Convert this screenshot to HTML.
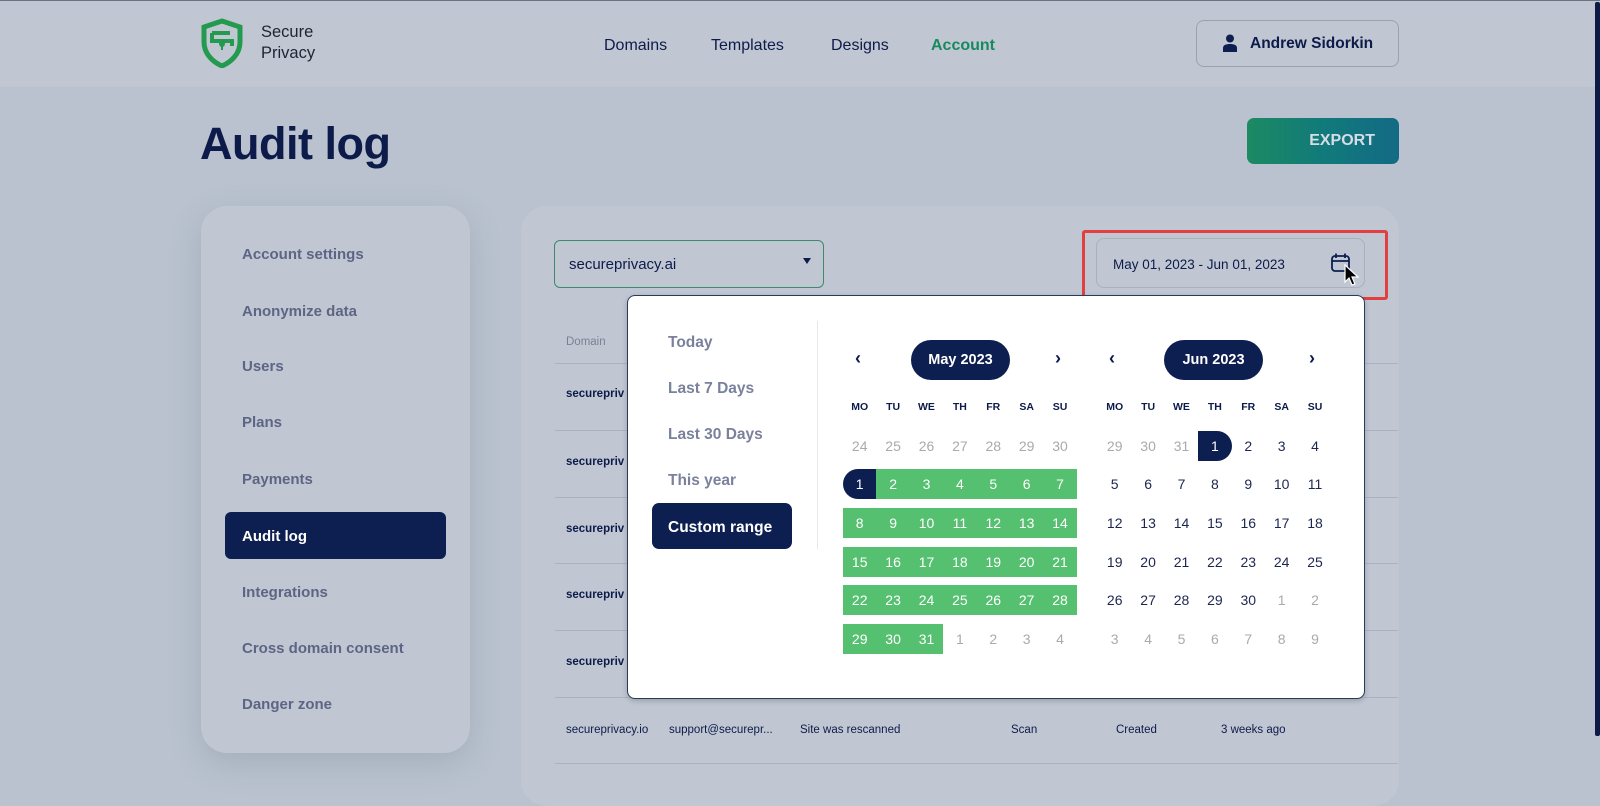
<!DOCTYPE html>
<html><head><meta charset="utf-8"><style>
*{box-sizing:border-box;margin:0;padding:0}
body{width:1600px;height:785px;overflow:hidden;background:#b9c2ce;font-family:"Liberation Sans",sans-serif;color:#0d1b4a;position:relative}
.a{position:absolute}
.hdr{left:0;top:0;width:1600px;height:87px;background:#c0c7d2;border-top:1px solid #6a7285}
.nav{font-size:16px;top:37px;color:#0d1b4a}
.menu{left:242px;font-size:15px;font-weight:bold;color:#5d6585}
.card{border-radius:26px;background:#c0c7d2}
.pre{left:668px;font-size:15.5px;font-weight:bold;color:#7a819c}
.grid{display:grid;grid-template-columns:repeat(7,33.4px);grid-auto-rows:38.6px;font-size:14px;text-align:center}
.grid span{display:flex;align-items:center;justify-content:center}
.grid .d{font-size:10.5px;font-weight:bold;color:#0d1b4a}
.grid .g{color:#aaa}
.grid .n{color:#1d2650}
.grid .r{background:#55c06f;color:#fff;height:30px;align-self:center}
.grid .s{background:#0d1f50;color:#fff;height:30px;align-self:center;border-radius:15px 0 0 15px}
.grid .e{background:#0d1f50;color:#fff;height:30px;align-self:center;border-radius:0 15px 15px 0}
.pill{height:40px;width:99px;border-radius:20px;background:#0d1f50;color:#fff;font-weight:bold;font-size:14.5px;display:flex;align-items:center;justify-content:center}
.arr{font-size:18px;font-weight:bold;color:#0d1b4a}
.row{left:555px;width:843px;height:1px;background:#aab2c0}
.cell{font-size:11.5px;color:#0d1b4a}
</style></head><body>
<div class="a hdr"></div>
<svg class="a" style="left:200px;top:18px" width="44" height="50" viewBox="0 0 44 50"><path d="M22 3 L40 9 V24 C40 36 31 44 22 48 C13 44 4 36 4 24 V9 Z" fill="none" stroke="#239a4e" stroke-width="5"/><path d="M12 15 H30 M12 15 V23 H32 V28" fill="none" stroke="#239a4e" stroke-width="4"/><circle cx="22" cy="26" r="3" fill="#239a4e"/><rect x="21" y="27" width="2" height="5" fill="#239a4e"/></svg>
<div class="a" style="left:261px;top:22px;font-size:16.5px;line-height:21px;color:#1f2433">Secure<br>Privacy</div>
<div class="a nav" style="left:604px">Domains</div>
<div class="a nav" style="left:711px">Templates</div>
<div class="a nav" style="left:831px">Designs</div>
<div class="a nav" style="left:931px;color:#178a5e;font-weight:bold">Account</div>
<div class="a" style="left:1196px;top:20px;width:203px;height:47px;border:1px solid #9aa2b2;border-radius:8px"></div>
<svg class="a" style="left:1222px;top:34px" width="16" height="18" viewBox="0 0 16 18"><circle cx="8" cy="4.5" r="4" fill="#0d1f50"/><path d="M1 18 V14 C1 11 4 10 8 10 C12 10 15 11 15 14 V18 Z" fill="#0d1f50"/></svg>
<div class="a" style="left:1250px;top:35px;font-size:15.5px;font-weight:bold">Andrew Sidorkin</div>
<div class="a" style="left:200px;top:118px;font-size:45px;font-weight:bold;letter-spacing:-0.5px">Audit log</div>
<div class="a" style="left:1247px;top:118px;width:152px;height:46px;border-radius:7px;background:linear-gradient(90deg,#1c8a62,#117a7a 50%,#136a85);color:#d6dde6;font-weight:bold;font-size:16px;display:flex;align-items:center;justify-content:flex-end;padding-right:24px">EXPORT</div>
<div class="a card" style="left:201px;top:206px;width:269px;height:547px;box-shadow:0 10px 30px rgba(120,130,150,.3)"></div>
<div class="a menu" style="top:246px">Account settings</div>
<div class="a menu" style="top:303px">Anonymize data</div>
<div class="a menu" style="top:358px">Users</div>
<div class="a menu" style="top:414px">Plans</div>
<div class="a menu" style="top:471px">Payments</div>
<div class="a" style="left:225px;top:512px;width:221px;height:47px;border-radius:6px;background:#0d1f50"></div>
<div class="a menu" style="top:528px;color:#fff">Audit log</div>
<div class="a menu" style="top:584px">Integrations</div>
<div class="a menu" style="top:640px">Cross domain consent</div>
<div class="a menu" style="top:696px">Danger zone</div>
<div class="a card" style="left:521px;top:206px;width:878px;height:600px"></div>
<div class="a" style="left:554px;top:240px;width:270px;height:48px;border:1px solid #3e8a6a;border-radius:6px"></div>
<div class="a" style="left:569px;top:256px;font-size:15px">secureprivacy.ai</div>
<div class="a" style="left:803px;top:258px;width:0;height:0;border-left:4.5px solid transparent;border-right:4.5px solid transparent;border-top:6px solid #0d1b4a"></div>
<div class="a" style="left:566px;top:336px;font-size:11.5px;color:#7a8196">Domain</div>
<div class="a row" style="top:363px"></div><div class="a row" style="top:430px"></div><div class="a row" style="top:497px"></div><div class="a row" style="top:563px"></div><div class="a row" style="top:630px"></div><div class="a row" style="top:697px"></div><div class="a row" style="top:763px"></div>
<div class="a cell" style="left:566px;top:388px;font-weight:bold">securepriv</div>
<div class="a cell" style="left:566px;top:456px;font-weight:bold">securepriv</div>
<div class="a cell" style="left:566px;top:523px;font-weight:bold">securepriv</div>
<div class="a cell" style="left:566px;top:589px;font-weight:bold">securepriv</div>
<div class="a cell" style="left:566px;top:656px;font-weight:bold">securepriv</div>
<div class="a cell" style="left:566px;top:724px">secureprivacy.io</div>
<div class="a cell" style="left:669px;top:724px">support@securepr...</div>
<div class="a cell" style="left:800px;top:724px">Site was rescanned</div>
<div class="a cell" style="left:1011px;top:724px">Scan</div>
<div class="a cell" style="left:1116px;top:724px">Created</div>
<div class="a cell" style="left:1221px;top:724px">3 weeks ago</div>
<div class="a" style="left:1096px;top:238px;width:269px;height:50px;border:1px solid #a9b1bf;border-radius:8px"></div>
<div class="a" style="left:1113px;top:257px;font-size:13.5px">May 01, 2023 - Jun 01, 2023</div>
<svg class="a" style="left:1330px;top:252px" width="22" height="22" viewBox="0 0 22 22"><rect x="2" y="4" width="17" height="15" rx="3" fill="none" stroke="#0d1f50" stroke-width="1.8"/><path d="M2 9 H19 M6 1.5 V6 M15 1.5 V6" stroke="#0d1f50" stroke-width="1.8"/></svg>
<svg class="a" style="left:1344px;top:264px" width="16" height="24" viewBox="0 0 16 24"><path d="M1 1 V18 L5 14 L8 21 L11 20 L8 13 L14 13 Z" fill="#000" stroke="#fff" stroke-width="1.2"/></svg>
<div class="a" style="left:1082px;top:230px;width:306px;height:70px;border:3px solid #e0403f;border-radius:3px"></div>
<div class="a" style="left:627px;top:295px;width:738px;height:404px;background:#fff;border:1px solid #2a3a5a;border-radius:8px;box-shadow:0 2px 6px rgba(0,0,0,.2)"></div>
<div class="a pre" style="top:334px">Today</div>
<div class="a pre" style="top:380px">Last 7 Days</div>
<div class="a pre" style="top:426px">Last 30 Days</div>
<div class="a pre" style="top:472px">This year</div>
<div class="a" style="left:652px;top:503px;width:140px;height:46px;border-radius:7px;background:#0d1f50;color:#fff;font-weight:bold;font-size:15.5px;padding:16px 0 0 16px">Custom range</div>
<div class="a" style="left:817px;top:321px;width:1px;height:228px;background:#e6e8ec"></div>
<div class="a arr" style="left:855px;top:348px">&#8249;</div>
<div class="a pill" style="left:911px;top:340px">May 2023</div>
<div class="a arr" style="left:1055px;top:348px">&#8250;</div>
<div class="a arr" style="left:1109px;top:348px">&#8249;</div>
<div class="a pill" style="left:1164px;top:340px">Jun 2023</div>
<div class="a arr" style="left:1309px;top:348px">&#8250;</div>
<div class="a grid" style="left:843px;top:388px">
<span class="d">MO</span><span class="d">TU</span><span class="d">WE</span><span class="d">TH</span><span class="d">FR</span><span class="d">SA</span><span class="d">SU</span>
<span class="g">24</span><span class="g">25</span><span class="g">26</span><span class="g">27</span><span class="g">28</span><span class="g">29</span><span class="g">30</span>
<span class="s">1</span><span class="r">2</span><span class="r">3</span><span class="r">4</span><span class="r">5</span><span class="r">6</span><span class="r">7</span>
<span class="r">8</span><span class="r">9</span><span class="r">10</span><span class="r">11</span><span class="r">12</span><span class="r">13</span><span class="r">14</span>
<span class="r">15</span><span class="r">16</span><span class="r">17</span><span class="r">18</span><span class="r">19</span><span class="r">20</span><span class="r">21</span>
<span class="r">22</span><span class="r">23</span><span class="r">24</span><span class="r">25</span><span class="r">26</span><span class="r">27</span><span class="r">28</span>
<span class="r">29</span><span class="r">30</span><span class="r">31</span><span class="g">1</span><span class="g">2</span><span class="g">3</span><span class="g">4</span>
</div>
<div class="a grid" style="left:1098px;top:388px">
<span class="d">MO</span><span class="d">TU</span><span class="d">WE</span><span class="d">TH</span><span class="d">FR</span><span class="d">SA</span><span class="d">SU</span>
<span class="g">29</span><span class="g">30</span><span class="g">31</span><span class="e">1</span><span class="n">2</span><span class="n">3</span><span class="n">4</span>
<span class="n">5</span><span class="n">6</span><span class="n">7</span><span class="n">8</span><span class="n">9</span><span class="n">10</span><span class="n">11</span>
<span class="n">12</span><span class="n">13</span><span class="n">14</span><span class="n">15</span><span class="n">16</span><span class="n">17</span><span class="n">18</span>
<span class="n">19</span><span class="n">20</span><span class="n">21</span><span class="n">22</span><span class="n">23</span><span class="n">24</span><span class="n">25</span>
<span class="n">26</span><span class="n">27</span><span class="n">28</span><span class="n">29</span><span class="n">30</span><span class="g">1</span><span class="g">2</span>
<span class="g">3</span><span class="g">4</span><span class="g">5</span><span class="g">6</span><span class="g">7</span><span class="g">8</span><span class="g">9</span>
</div>
<div class="a" style="left:1595px;top:2px;width:5px;height:734px;background:#0d1a45;border-radius:2px"></div>
</body></html>
